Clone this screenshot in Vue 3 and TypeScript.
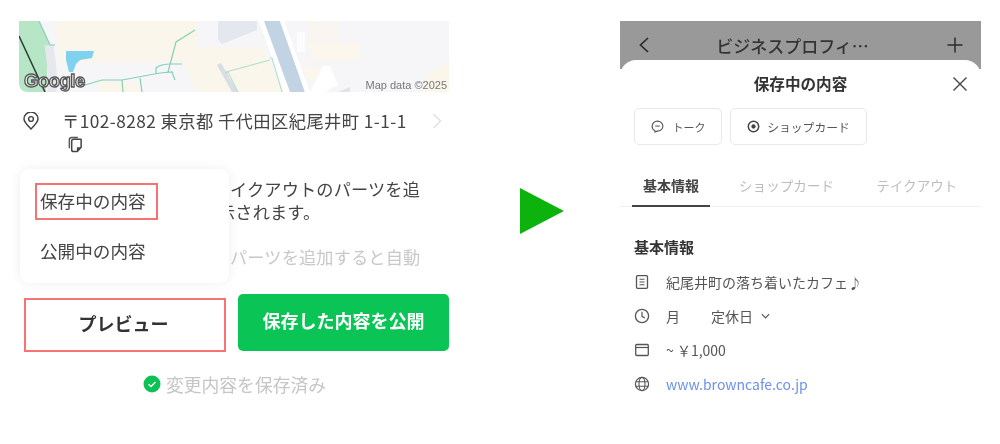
<script setup lang="ts">
const menuItems = [
  { label: '保存中の内容', marked: true },
  { label: '公開中の内容', marked: false },
]
const tabs = ['基本情報', 'ショップカード', 'テイクアウト']
</script>

<template>
  <div class="page">
    <section class="editor">
      <svg class="map" viewBox="19 21 430 71">
        <rect x="19" y="21" width="430" height="71" fill="#f6f6f8" />
        <path d="M55 21H197V47H183V62H60Z" fill="#faf6ec" />
        <path d="M183 47H262L285 92H197L183 62Z" fill="#faf6ec" />
        <path d="M97 82H140V92H97Z" fill="#faf6ec" />
        <path d="M218 21H257V30L222 44L218 40Z" fill="#e4e7ee" />
        <path d="M217 65L221 63L238 92H232Z" fill="#d8dde6" />
        <path d="M307 43H360V60H312Z" fill="#fbf7ec" />
        <path d="M307 21H340V43H307Z" fill="#fbf7ec" opacity=".6" />
        <path d="M303 67H323V80H308Z" fill="#fbf7ec" />
        <path d="M297 32H305V52H297Z" fill="#fcfcfd" />
        <path d="M424 82Q428 70 449 62V92H424Z" fill="#faf6ea" />
        <path d="M259 21H264L290 92H284Z" fill="#fff" />
        <path d="M264 21H280L305 92H290Z" fill="#c2d3e4" />
        <path d="M280 21H284L310 92H305Z" fill="#fff" />
        <path d="M323 66H330L338 85L325 92H310Z" fill="#fff" />
        <path d="M338 92L350 87V92Z" fill="#dfe3ec" />
        <path d="M19 21H39L50 45L48 60L46 92H28Q19 92 19 84Z" fill="#b7e6c6" />
        <path d="M19 36L45 92" stroke="#2d3a36" stroke-width="1.5" fill="none" />
        <path d="M49 45L52 68V92" stroke="#e6e8ee" stroke-width="9" fill="none" />
        <path d="M66 51H94L92 58L80 60L76 64L73 72H69L66 60Z" fill="#7fd2ee" />
        <path d="M39 21L50 45H55M85 85L102 80H122L160 73L172 72L175 80M122 80L123 92M140 78L142 92M156 74V68Q160 64 172 64H182M168 72L176 42L195 30" stroke="#86d0b4" stroke-width="1.2" fill="none" />
        <path d="M225 72L228 73M228 72L238 92M226 72L270 60M270 58H272L282 92" stroke="#a9dfc8" stroke-width="1" fill="none" />
        <text x="24" y="87" class="google">Google</text>
        <text x="447" y="89" text-anchor="end" class="credit">Map data ©2025</text>
      </svg>

      <div class="address">
        <svg class="pin" viewBox="0 0 16 18" width="16" height="18">
          <path d="M8 17C3.5 12.5 1 9.5 1 7a7 7 0 0 1 14 0C15 9.5 12.5 12.5 8 17Z" fill="none" stroke="#444" stroke-width="1.5" />
          <circle cx="8" cy="7" r="2.4" fill="none" stroke="#444" stroke-width="1.4" />
        </svg>
        <p>
          〒102-8282 東京都 千代田区紀尾井町 1-1-1
          <svg class="copy" viewBox="0 0 16 18" width="16" height="17">
            <path d="M2 13V4Q2 1.5 4.5 1.5H11" fill="none" stroke="#555" stroke-width="1.5" />
            <path d="M4.5 5.5Q4.5 3.5 6.5 3.5H14.5V12L10.5 16.5H6.5Q4.5 16.5 4.5 14.5Z" fill="none" stroke="#444" stroke-width="1.6" stroke-linejoin="round" />
            <path d="M10 12H14.5L10 16.5Z" fill="#444" />
          </svg>
        </p>
        <svg class="more" viewBox="0 0 10 16" width="10" height="16">
          <path d="M1.5 1L8.5 8L1.5 15" fill="none" stroke="#e0e0e0" stroke-width="1.4" />
        </svg>
      </div>

      <div class="notes">
        <div class="menu">
          <div v-for="item in menuItems" :key="item.label" :class="['menu-item', { marked: item.marked }]">{{ item.label }}</div>
        </div>
        <div class="note-text">
          <p>イクアウトのパーツを追</p>
          <p class="note-b">示されます。</p>
          <p class="note-c">パーツを追加すると自動</p>
        </div>
      </div>

      <div class="actions">
        <button class="preview">プレビュー</button>
        <button class="publish">保存した内容を公開</button>
      </div>

      <div class="saved">
        <svg viewBox="0 0 18 18" width="18" height="18">
          <circle cx="9" cy="9" r="8.5" fill="#0dc254" />
          <path d="M5.5 9.2L8 11.5L12.5 7" fill="none" stroke="#fff" stroke-width="1.4" />
        </svg>
        <span>変更内容を保存済み</span>
      </div>
    </section>

    <svg class="arrow" viewBox="0 0 44 46" width="44" height="46">
      <path d="M0 0L44 23L0 46Z" fill="#0cb30c" />
    </svg>

    <section class="phone">
      <header class="bar">
        <svg viewBox="0 0 12 16" width="12" height="16">
          <path d="M10 1L2.5 8L10 15" fill="none" stroke="#2b2b2b" stroke-width="1.7" />
        </svg>
        <strong>ビジネスプロフィ…</strong>
        <svg viewBox="0 0 16 16" width="16" height="16">
          <path d="M8 0.5V15.5M0.5 8H15.5" fill="none" stroke="#2b2b2b" stroke-width="1.5" />
        </svg>
      </header>

      <div class="sheet">
        <div class="sheet-head">
          <h2>保存中の内容</h2>
          <svg viewBox="0 0 16 16" width="16" height="16">
            <path d="M1.5 1.5L14.5 14.5M14.5 1.5L1.5 14.5" fill="none" stroke="#444" stroke-width="1.4" />
          </svg>
        </div>

        <div class="shortcuts">
          <button class="talk">
            <svg viewBox="0 0 14 14" width="13" height="13">
              <path d="M4 11.2C2.2 10.3 1.2 8.6 1.2 6.6C1.2 3.6 3.8 1.2 7 1.2S12.8 3.6 12.8 6.6S10.2 12 7 12Q5.6 12 4.3 13Z" fill="none" stroke="#555" stroke-width="1.2" stroke-linejoin="round" />
              <path d="M4.5 6.5H9.5" stroke="#555" stroke-width="1.1" />
            </svg>
            トーク
          </button>
          <button class="card">
            <svg viewBox="0 0 14 14" width="13" height="13">
              <circle cx="7" cy="7" r="5.6" fill="none" stroke="#444" stroke-width="1.6" />
              <circle cx="7" cy="7" r="2.3" fill="#444" />
            </svg>
            ショップカード
          </button>
        </div>

        <nav class="tabs">
          <span v-for="(tab, i) in tabs" :key="tab" :class="['tab', { active: i === 0 }]">{{ tab }}</span>
        </nav>

        <div class="info">
          <h3>基本情報</h3>
          <div class="row">
            <svg viewBox="0 0 16 16" width="16" height="16">
              <rect x="2.5" y="1.7" width="11" height="12.6" rx="1" fill="none" stroke="#555" stroke-width="1.3" />
              <path d="M5.5 5.2H10.5M5.5 8H10.5M5.5 10.8H10.5" stroke="#555" stroke-width="1.1" />
            </svg>
            <span>紀尾井町の落ち着いたカフェ♪</span>
          </div>
          <div class="row">
            <svg viewBox="0 0 16 16" width="16" height="16">
              <circle cx="8" cy="8" r="6.6" fill="none" stroke="#555" stroke-width="1.3" />
              <path d="M8 3.8V8.3L11 10" fill="none" stroke="#555" stroke-width="1.2" />
            </svg>
            <span class="day">月</span>
            <span>定休日</span>
            <svg class="open" viewBox="0 0 10 6" width="9" height="6">
              <path d="M1 1L5 5L9 1" fill="none" stroke="#555" stroke-width="1.3" />
            </svg>
          </div>
          <div class="row">
            <svg viewBox="0 0 16 16" width="16" height="16">
              <rect x="1.7" y="2.5" width="12.6" height="11" rx="1" fill="none" stroke="#555" stroke-width="1.3" />
              <path d="M1.7 5.5H14.3" stroke="#555" stroke-width="1.2" />
            </svg>
            <span>~ ￥1,000</span>
          </div>
          <div class="row">
            <svg viewBox="0 0 16 16" width="16" height="16">
              <circle cx="8" cy="8" r="6.6" fill="none" stroke="#555" stroke-width="1.2" />
              <ellipse cx="8" cy="8" rx="3" ry="6.6" fill="none" stroke="#555" stroke-width="1.1" />
              <path d="M1.8 5.8H14.2M1.8 10.2H14.2" stroke="#555" stroke-width="1.1" />
            </svg>
            <a>www.browncafe.co.jp</a>
          </div>
        </div>
      </div>
    </section>
  </div>
</template>

<style scoped>
.page {
  display: flex;
  align-items: flex-start;
  width: 1000px;
  height: 444px;
  padding-top: 21px;
  box-sizing: border-box;
  overflow: hidden;
  background: #fff;
  font-family: "Noto Sans CJK JP", "Noto Sans", sans-serif;
  filter: blur(0.5px);
}
p, h2, h3 { margin: 0; }
button { font-family: inherit; cursor: pointer; }

.editor { width: 430px; margin-left: 19px; flex: none; }
.map { display: block; width: 430px; height: 71px; border-radius: 0 0 0 8px; }
.google { font: 700 18.5px "Liberation Sans", sans-serif; fill: #e8e8e8; stroke: #555; stroke-width: 1.3px; letter-spacing: -0.5px; }
.credit { font: 11px "Liberation Sans", sans-serif; fill: #777; }

.address { display: flex; align-items: flex-start; height: 48px; margin-top: 17px; color: #444; }
.pin { margin: 3px 0 0 4px; flex: none; }
.address p { width: 352px; margin-left: 23px; font-size: 17.3px; line-height: 24px; letter-spacing: 0.42px; }
.copy { display: block; margin: 3px 0 0 5px; }
.more { margin: 4px 0 0 18px; flex: none; }

.notes { display: flex; margin-top: 12px; }
.menu {
  display: flex;
  flex-direction: column;
  flex: none;
  gap: 13px;
  width: 209px;
  height: 114px;
  margin-left: 1px;
  padding: 14px 15px;
  box-sizing: border-box;
  background: #fff;
  border-radius: 9px;
  box-shadow: 0 0 12px rgba(0, 0, 0, 0.07);
}
.menu-item { width: 123px; height: 39px; line-height: 32px; padding-left: 3px; box-sizing: border-box; border: 2px solid transparent; font-size: 17.6px; color: #444; }
.menu-item.marked { border: 2px solid #f77272; }

.note-text { flex: 1; min-width: 0; padding: 8px 0 0 1px; overflow: hidden; font-size: 17.2px; line-height: 23px; letter-spacing: 0.15px; white-space: nowrap; color: #444; }
.note-b { margin-left: -12px; }
.note-c { margin-top: 22px; color: #c8c8c8; }

.actions { display: flex; align-items: flex-end; gap: 12px; margin-top: 11px; padding-left: 5px; }
.preview { width: 202px; height: 54px; margin-bottom: -1px; padding: 0 3px 4px 0; background: #fff; border: 2px solid #f77272; font-size: 18px; font-weight: 700; color: #333; }
.publish { width: 211px; height: 57px; padding: 0 0 5px; background: #0ac555; border: none; border-radius: 5px; font-size: 18px; font-weight: 700; color: #fff; }

.saved { display: flex; align-items: center; justify-content: center; gap: 5px; width: 431px; margin-top: 21px; font-size: 17.8px; line-height: 24px; color: #c6c6c6; }

.arrow { flex: none; margin: 167px 0 0 71px; }

.phone { flex: none; width: 361px; margin-left: 56px; }
.bar { display: flex; align-items: center; justify-content: space-between; height: 48px; padding: 0 18px; background: #999; color: #333; }
.bar strong { margin-right: 12px; font-size: 17px; font-weight: 500; }
.sheet { position: relative; margin-top: -9px; background: #fff; border-radius: 16px 16px 0 0; }
.sheet-head { display: grid; grid-template-columns: 1fr auto 1fr; align-items: center; height: 48px; }
.sheet-head h2 { grid-column: 2; margin-top: -3px; font-size: 15.6px; font-weight: 700; color: #333; }
.sheet-head svg { grid-column: 3; justify-self: end; margin-right: 13px; }

.shortcuts { display: flex; gap: 8px; padding-left: 14px; }
.shortcuts button { display: flex; align-items: center; justify-content: center; gap: 7px; height: 37px; padding: 0; background: #fff; border: 1px solid #e9e9e9; border-radius: 5px; font-size: 11.8px; color: #555; }
.shortcuts .talk { width: 88px; gap: 9px; font-size: 11px; }
.card { width: 137px; }

.tabs { display: flex; gap: 20px; height: 35px; margin-top: 27px; padding-left: 12px; border-bottom: 1px solid #f1f1f1; box-sizing: border-box; }
.tab { height: 35px; padding: 0 11px; box-sizing: border-box; font-size: 13.6px; line-height: 26px; color: #bdbdbd; }
.tab.active { margin-right: -2px; border-bottom: 2px solid #444; font-size: 14px; font-weight: 700; color: #444; }

.info { padding: 28px 0 0 14px; }
.info h3 { font-size: 15px; line-height: 24px; font-weight: 700; color: #333; }
.row { display: flex; align-items: center; height: 34px; font-size: 14px; color: #555; }
.row:first-of-type { margin-top: 6px; }
.row > svg:first-child { margin-right: 16px; flex: none; }
.day { width: 45px; }
.open { margin-left: 8px; }
.row a { color: #6d90e8; }
</style>
